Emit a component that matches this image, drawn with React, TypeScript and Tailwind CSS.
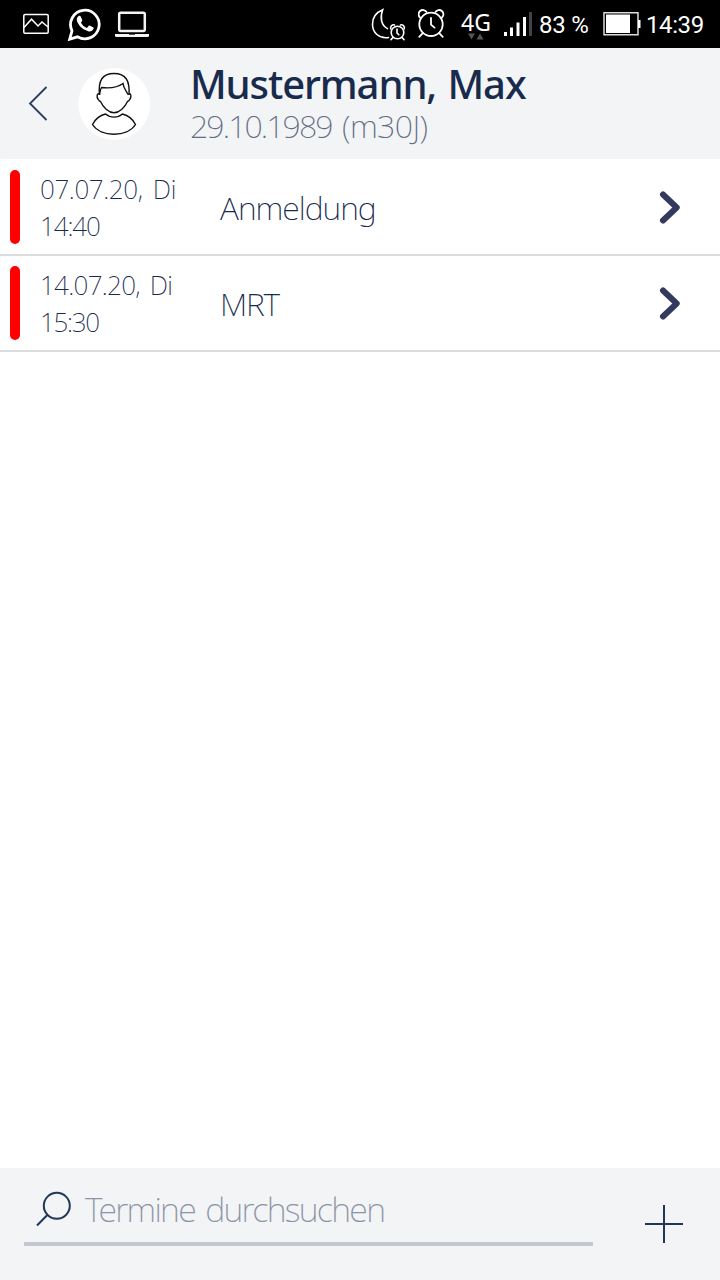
type Appointment = {
  date: string;
  time: string;
  title: string;
  dateClass: string;
  timeClass: string;
  titleClass: string;
};

const appointments: Appointment[] = [
  {
    date: "07.07.20, Di",
    time: "14:40",
    title: "Anmeldung",
    dateClass: "tracking-[-0.4px] [word-spacing:4px]",
    timeClass: "tracking-[-1.1px]",
    titleClass: "tracking-[-1px]",
  },
  {
    date: "14.07.20, Di",
    time: "15:30",
    title: "MRT",
    dateClass: "tracking-[-0.7px] [word-spacing:4px]",
    timeClass: "tracking-[-1.3px]",
    titleClass: "tracking-[-1.3px]",
  },
];

function StatusBar() {
  return (
    <div className="flex h-12 shrink-0 items-center bg-black font-['Roboto',sans-serif] text-2xl text-white">
      {/* notifications */}
      <svg className="ml-[22px] h-12 w-7" viewBox="22 0 28 48" fill="none" stroke="#fff" strokeWidth="1.5">
        <rect x="23.8" y="14.6" width="24.4" height="18.6" rx="1.2" />
        <path d="M24 27.5l7.5-8.3 6.5 6.8 4-4 6 5" />
      </svg>
      <svg className="ml-[17px] h-12 w-[34px]" viewBox="67 0 34 48" fill="none">
        <path d="M69.7 39.2l2.3-8.4A14.3 14.3 0 1 1 77.500 36.800z" stroke="#fff" strokeWidth="2.8" />
        <path
          d="M78.4 16.2c.8-.6 1.9-.5 2.3.3l1.5 3.4c.3.7-.2 1.3-1.3 2.5 1.4 2.7 3.4 4.5 6 5.5l1.7-1.9c.4-.5.9-.5 1.4-.3l3.1 1.6c.6.3.6.8.4 1.5-.7 2.1-3.2 3-5.3 2.4-5.9-1.6-10.2-6.1-11.3-10.6-.4-1.8.3-3.5 1.5-4.4z"
          fill="#fff"
        />
      </svg>
      <svg className="ml-[13px] h-12 w-9" viewBox="114 0 36 48" fill="none">
        <rect x="119.2" y="12.7" width="25.6" height="18.3" rx="1.5" stroke="#f5f5f5" strokeWidth="2.5" />
        <path d="M115 34h34v1.5q0 1.5-1.5 1.5h-31q-1.5 0-1.5-1.5z" fill="#f5f5f5" />
        <path d="M129 34.5h6" stroke="#555" />
      </svg>

      {/* night mode and alarm */}
      <svg className="ml-[221px] h-12 w-9" viewBox="371 0 36 48" fill="none" stroke="#fff" strokeWidth="1.6" strokeLinecap="round">
        <path d="M388.5 37.5c-9.5 1.4-16-5-16-13.3 0-6.8 4.5-12 10.2-14.4-3 7.5-1.5 15.7 4.8 18.8" />
        <circle cx="397.5" cy="32.5" r="6.3" />
        <path d="M397 29v4l1.8 1.8M390.8 28.8a3 3 0 0 1 3.7-3.9M400.5 24.9a3 3 0 0 1 3.7 3.9M393 37.5l-2 2.1M402 37.5l2 2.1" />
      </svg>
      <svg className="ml-[11px] h-12 w-[28px]" viewBox="418 0 28 48" fill="none" stroke="#fff" strokeWidth="1.8" strokeLinecap="round">
        <circle cx="431" cy="24.3" r="11.7" />
        <path d="M431 17.8v6.8l3.5 3M420 17.5a4.3 4.3 0 1 1 6.5-5.5M435.5 12a4.3 4.3 0 1 1 6.5 5.5M422.800 33.200l-3.5 3.6M439.200 33.200l3.5 3.6" />
      </svg>

      {/* mobile network */}
      <div className="relative ml-[15px] w-8 pb-1 font-['Noto_Sans',sans-serif] text-[23px] leading-6">
        4G
        <svg className="absolute top-[23px] left-[7px] h-[7px] w-4" viewBox="0 0 16 7" fill="#555">
          <path d="M0 .5h7l-3.5 6zM8.500 6.500h7L12 .5z" />
        </svg>
      </div>
      <svg className="ml-[10px] h-12 w-[30px]" viewBox="503 0 30 48">
        <path fill="#fff" d="M504 32h3v4h-3zM510 27.5h3V36h-3zM516.5 22.5h3V36h-3zM523 17h3v19h-3z" />
        <path fill="#444" d="M529 12h3v24h-3z" />
      </svg>

      <span className="ml-1.5 w-[62px] pt-0.5 whitespace-nowrap tracking-[-0.2px]">83 %</span>
      <svg className="ml-0.5 h-12 w-[38px]" viewBox="603 0 38 48">
        <path d="M604 12.7h34v22h-34z" fill="none" stroke="#ddd" strokeWidth="1.5" />
        <path d="M606 14.5h24V33h-24zM638 20h2.5v8H638z" fill="#fff" />
      </svg>
      <span className="ml-[5px] pt-0.5 whitespace-nowrap tracking-[-0.4px]">14:39</span>
    </div>
  );
}

function Header() {
  return (
    <div className="flex h-[111px] shrink-0 bg-[#f2f4f6] text-[#182b4d]">
      <svg className="mt-9 ml-[26px] h-10 w-6" viewBox="26 84 24 40" fill="none" stroke="#2b3d60" strokeWidth="1.8">
        <path d="M46.5 87L30 103.5 46.5 120" />
      </svg>
      <svg className="mt-5 ml-7 h-[72px] w-[72px]" viewBox="78 68 72 72" fill="none" stroke="#111" strokeWidth="1.4">
        <circle cx="114.2" cy="104" r="36" fill="#fff" stroke="none" />
        <path d="M99.5 95C98 81 102 73.5 114 73.5S130 81 129 95" />
        <path d="M99.5 95c.5-3 .5-5 2-7.5 7 .8 15 .8 21.5-4 .5 5 3 7 5.5 11.5" />
        <path d="M99.5 93.5c-3 0-2.8 3.5-1.5 5.5.8 1.5 1 2 2.5 2.5 2.500 5.500 8 11.200 13.500 11.200s11-5.700 13.500-11.200c1.5-.5 1.700-1 2.500-2.500 1.300-2 1.500-5.500-1-5.500" />
        <path d="M105.5 114c5 4.2 12 4.2 17 0 6 1.5 10 4.5 13 10.5-8 13-35 13-43 0 3-6 7-9 13-10.5z" />
      </svg>
      <div className="ml-10 whitespace-nowrap">
        <h1 className="mt-[11px] text-[40px] leading-[50px] font-[550] tracking-[-1.1px] [word-spacing:2px]">Mustermann, Max</h1>
        <p className="text-[32px] leading-[33px] font-[250] tracking-[-1.9px] text-[#626b82] [word-spacing:4px]">
          29.10.1989 <span className="tracking-[-0.6px]">(m30J)</span>
        </p>
      </div>
    </div>
  );
}

function AppointmentRow({ item }: { item: Appointment }) {
  return (
    <li className="flex h-24 items-start border-b-2 border-[#dcdcdc] whitespace-nowrap text-[#182b4d]">
      <div className="mt-2.5 ml-2.5 h-[74px] w-2.5 rounded-full bg-[#f00]" />
      <div className="mt-[11px] ml-5 w-[180px] text-[26px] leading-[37px] font-[250]">
        <p className={item.dateClass}>{item.date}</p>
        <p className={item.timeClass}>{item.time}</p>
      </div>
      <p className={`mt-[26px] flex-1 text-[32px] leading-[44px] font-[250] ${item.titleClass}`}>{item.title}</p>
      <svg className="mt-[30px] mr-[38px] h-9 w-6" viewBox="658 190 24 36" fill="none" stroke="#333a5e" strokeWidth="6" strokeLinecap="round" strokeLinejoin="round">
        <path d="M663 194.500l13.700 13-13.700 13" />
      </svg>
    </li>
  );
}

function SearchBar() {
  return (
    <div className="flex h-28 shrink-0 bg-[#f2f4f6]">
      <div className="ml-6 flex h-[78px] w-[569px] border-b-4 border-[#c2c7d1]">
        <svg className="mt-5 ml-2.5 h-10 w-10" viewBox="34 1188 40 40" fill="none" stroke="#22365a" strokeWidth="2">
          <circle cx="56.8" cy="1205.8" r="13" />
          <path d="M47.3 1215L37 1225.5" />
        </svg>
        <p className="mt-[17px] ml-[11px] text-[34px] leading-[48px] font-[250] whitespace-nowrap tracking-[-1.7px] text-[#8c93a5] [word-spacing:3px]">
          Termine durchsuchen
        </p>
      </div>
      <svg className="mt-9 ml-[51px] h-10 w-10" viewBox="644 1204 40 40" stroke="#22365a" strokeWidth="2">
        <path d="M645 1224h38M664 1205v38" />
      </svg>
    </div>
  );
}

export default function App() {
  return (
    <div className="flex h-[1280px] w-[720px] flex-col overflow-hidden bg-white font-['Noto_Sans',sans-serif]">
      <StatusBar />
      <Header />
      <ul className="flex-1 pt-px">
        {appointments.map((item) => (
          <AppointmentRow key={item.date} item={item} />
        ))}
      </ul>
      <SearchBar />
    </div>
  );
}
